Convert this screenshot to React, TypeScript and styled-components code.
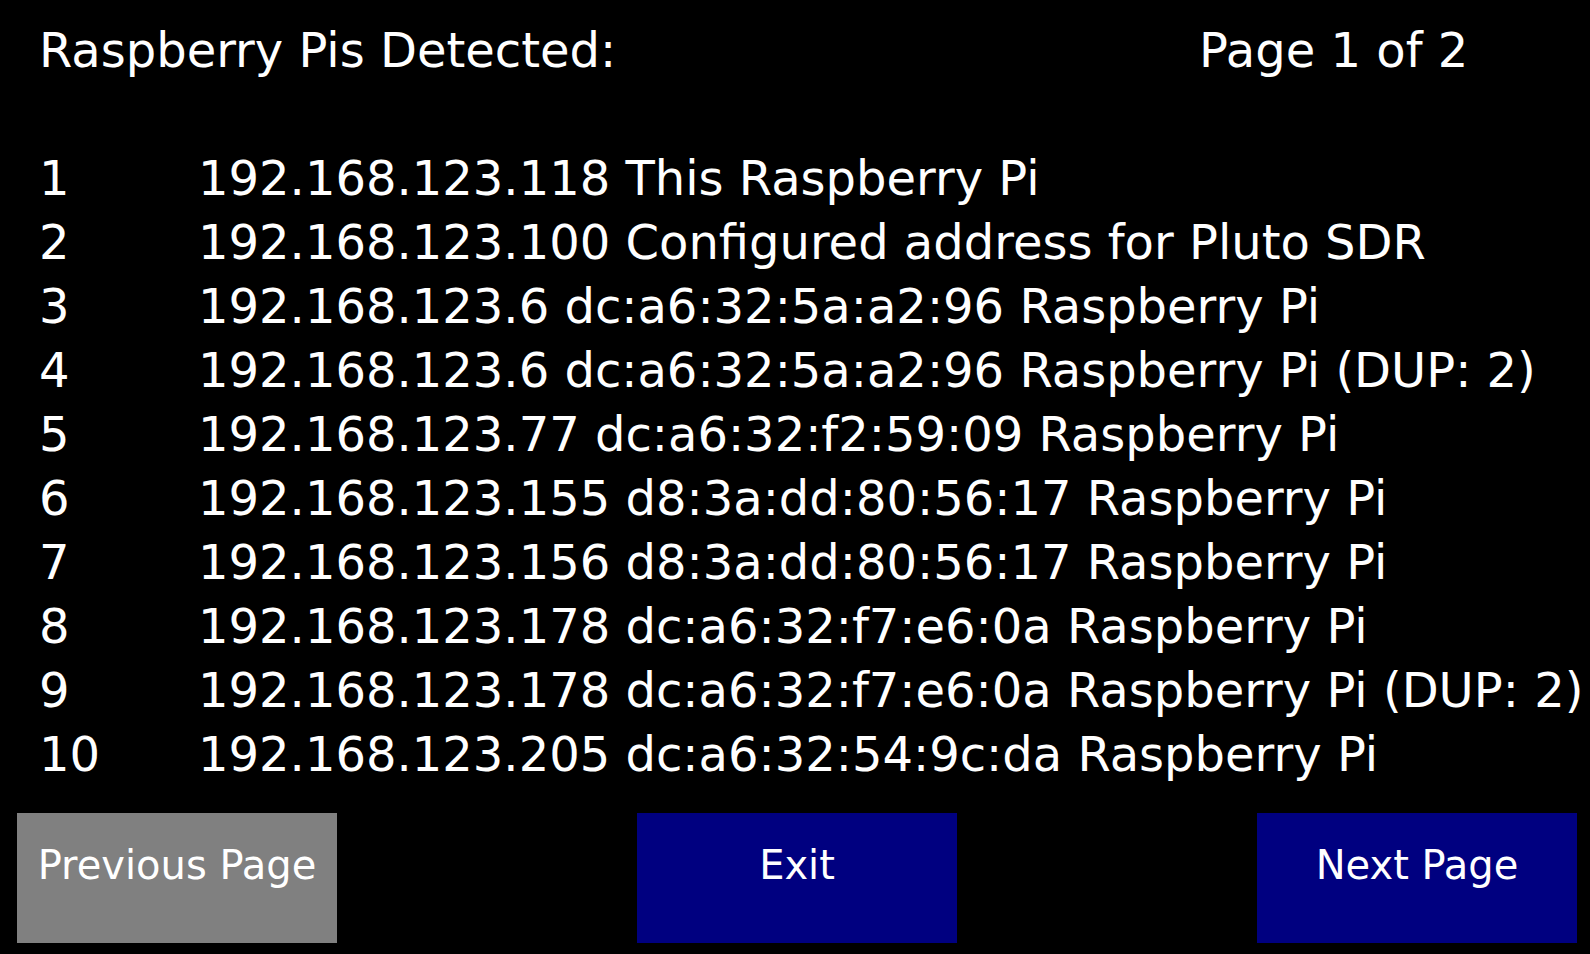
import React from "react";
import styled, { createGlobalStyle } from "styled-components";

const GlobalStyle = createGlobalStyle`
  html, body {
    margin: 0;
    padding: 0;
    background: #000;
  }
  body {
    font-family: "DejaVu Sans", "Liberation Sans", sans-serif;
    color: #fff;
  }
`;

const Screen = styled.div`
  width: 1590px;
  height: 954px;
  box-sizing: border-box;
  background: #000;
  padding: 18px 0 0 0;
  display: flex;
  flex-direction: column;
  overflow: hidden;
`;

const Header = styled.div`
  display: grid;
  grid-template-columns: 1160px auto;
  padding-left: 39px;
  height: 128px;
  font-size: 48px;
  line-height: 64px;
  white-space: nowrap;
`;

const List = styled.div`
  display: flex;
  flex-direction: column;
`;

const Row = styled.div`
  display: grid;
  grid-template-columns: 159px auto;
  padding-left: 39px;
  height: 64px;
  font-size: 48px;
  line-height: 64px;
  white-space: nowrap;
`;

const ButtonBar = styled.div`
  display: flex;
  justify-content: space-between;
  padding: 0 13px 0 17px;
  margin-top: 27px;
`;

const Button = styled.button<{ $disabled?: boolean }>`
  width: 320px;
  height: 130px;
  border: none;
  margin: 0;
  padding: 29px 0 0 0;
  display: flex;
  justify-content: center;
  align-items: flex-start;
  font-family: "DejaVu Sans", "Liberation Sans", sans-serif;
  font-size: 40px;
  line-height: normal;
  color: #fff;
  white-space: nowrap;
  background: ${(p) => (p.$disabled ? "#808080" : "#000080")};
`;

const devices = [
  "192.168.123.118 This Raspberry Pi",
  "192.168.123.100 Configured address for Pluto SDR",
  "192.168.123.6 dc:a6:32:5a:a2:96 Raspberry Pi",
  "192.168.123.6 dc:a6:32:5a:a2:96 Raspberry Pi (DUP: 2)",
  "192.168.123.77 dc:a6:32:f2:59:09 Raspberry Pi",
  "192.168.123.155 d8:3a:dd:80:56:17 Raspberry Pi",
  "192.168.123.156 d8:3a:dd:80:56:17 Raspberry Pi",
  "192.168.123.178 dc:a6:32:f7:e6:0a Raspberry Pi",
  "192.168.123.178 dc:a6:32:f7:e6:0a Raspberry Pi (DUP: 2)",
  "192.168.123.205 dc:a6:32:54:9c:da Raspberry Pi",
];

export default function App() {
  return (
    <>
      <GlobalStyle />
      <Screen>
        <Header>
          <span>Raspberry Pis Detected:</span>
          <span>Page 1 of 2</span>
        </Header>

        <List>
          {devices.map((d, i) => (
            <Row key={i}>
              <span>{i + 1}</span>
              <span>{d}</span>
            </Row>
          ))}
        </List>

        <ButtonBar>
          <Button $disabled>Previous Page</Button>
          <Button>Exit</Button>
          <Button>Next Page</Button>
        </ButtonBar>
      </Screen>
    </>
  );
}
